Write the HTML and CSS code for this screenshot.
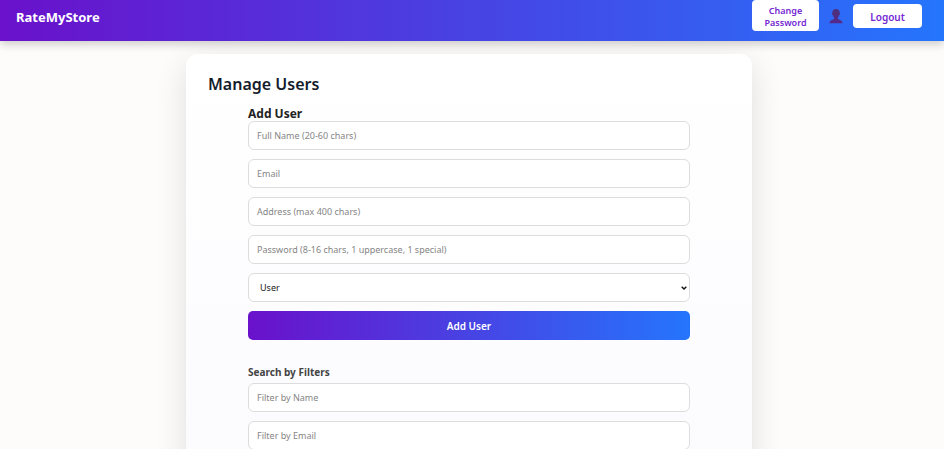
FILE: index.html
```html
<!DOCTYPE html>
<html lang="en">
<head>
<meta charset="utf-8">
<meta name="viewport" content="width=device-width, initial-scale=1">
<title>RateMyStore</title>
<link rel="stylesheet" href="styles.css">
</head>
<body>
<header class="navbar">
  <a class="brand" href="#">RateMyStore</a>
  <nav class="nav-actions">
    <button class="nav-button nav-button-wrap" type="button">Change Password</button>
    <svg class="avatar" viewBox="0 0 14 16" role="img" aria-label="Profile">
      <defs>
        <linearGradient id="bust" x1="0" y1="0" x2="0" y2="1">
          <stop offset="0" stop-color="#4a3078"/>
          <stop offset="1" stop-color="#55298c"/>
        </linearGradient>
      </defs>
      <path fill="url(#bust)" d="M7 1C4.800 1 3.300 2.400 3.300 4.700c0 .4-.4.500-.3 1.300.1.700.4 1 .7 1.100.3 1.200.8 2 1.400 2.600v1.200C3.700 11.700.7 12.100.4 15.300h13.200c-.3-3.200-3.300-3.600-4.700-4.400V9.700c.6-.6 1.100-1.400 1.400-2.600.3-.1.600-.4.700-1.100.1-.8-.3-.9-.3-1.300C10.700 2.400 9.200 1 7 1Z"/>
    </svg>
    <button class="nav-button nav-button-wide" type="button">Logout</button>
  </nav>
</header>
<main class="page">
  <section class="card">
    <h1 class="title">Manage Users</h1>
    <form class="form">
      <h2 class="form-title">Add User</h2>
      <input class="field" type="text" placeholder="Full Name (20-60 chars)" aria-label="Full Name">
      <input class="field" type="email" placeholder="Email" aria-label="Email">
      <input class="field" type="text" placeholder="Address (max 400 chars)" aria-label="Address">
      <input class="field" type="password" placeholder="Password (8-16 chars, 1 uppercase, 1 special)" aria-label="Password">
      <div class="select-wrap">
        <select class="field field-select" aria-label="Role">
          <option>User</option>
        </select>
        <svg class="chevron" viewBox="0 0 6 4" aria-hidden="true">
          <path d="M.7.7 3 3 5.300.7"/>
        </svg>
      </div>
      <button class="submit" type="submit">Add User</button>
    </form>
    <form class="form">
      <h3 class="filter-title">Search by Filters</h3>
      <input class="field" type="text" placeholder="Filter by Name" aria-label="Filter by Name">
      <input class="field" type="text" placeholder="Filter by Email" aria-label="Filter by Email">
    </form>
  </section>
</main>
</body>
</html>
```
FILE: styles.css
```css
* {
  box-sizing: border-box;
}

body {
  display: flex;
  flex-direction: column;
  height: 100vh;
  margin: 0;
  overflow: hidden;
  background: #fdfcfa;
  color: #222;
  font-family: "Segoe UI", "Noto Sans", "Open Sans", sans-serif;
  font-size: 9px;
}

h1,
h2,
h3 {
  margin: 0;
  font-weight: 700;
}

button,
input,
select {
  font: inherit;
}

.navbar {
  position: relative;
  z-index: 1;
  display: flex;
  flex: none;
  align-items: flex-start;
  justify-content: space-between;
  padding: 0 22px 10px 16px;
  background: linear-gradient(90deg, #6a11cb, #2575fc);
  box-shadow: 0 3px 9px rgba(0, 0, 0, 0.2);
}

.brand {
  padding-top: 8px;
  color: #fff;
  font-size: 13px;
  font-weight: 700;
  line-height: 18px;
  text-decoration: none;
}

.nav-actions {
  display: flex;
  align-items: center;
  gap: 10px;
}

.nav-button {
  padding: 5px 12px 3px;
  border: 0;
  border-radius: 4px;
  background: #fff;
  color: #7426d3;
  font-weight: 600;
  line-height: 12px;
}

.nav-button-wrap {
  width: 67px;
  height: 31px;
}

.nav-button-wide {
  width: 69px;
  height: 24px;
  font-size: 10px;
}

.avatar {
  width: 14px;
  height: 16px;
}

.page {
  flex: 1;
  min-height: 0;
  padding: 13px 192px 0 186px;
}

.card {
  padding: 18px 62px 22px;
  border-radius: 12px;
  background: linear-gradient(180deg, #fff, #fbfbfe);
  box-shadow: 0 9px 32px rgba(0, 0, 0, 0.12);
}

.title {
  margin: 0 0 10px -40px;
  color: #141c2b;
  font-size: 16px;
  font-weight: 600;
  line-height: 24px;
}

.form {
  display: flex;
  flex-direction: column;
  gap: 9px;
  margin-bottom: 24px;
}

.form-title {
  margin-bottom: -10px;
  font-size: 12px;
  line-height: 16px;
}

.filter-title {
  margin-bottom: -6px;
  color: #444;
  font-size: 10px;
  line-height: 16px;
}

.field {
  width: 100%;
  height: 29px;
  padding: 0 8px;
  border: 1px solid #ddd;
  border-radius: 6px;
  background: #fff;
  color: #222;
}

.field::placeholder {
  color: #858585;
}

.select-wrap {
  position: relative;
  display: flex;
}

.field-select {
  padding: 0 16px 0 11px;
  appearance: none;
}

.chevron {
  position: absolute;
  top: 13px;
  right: 3px;
  width: 6px;
  height: 4px;
  fill: none;
  stroke: #111;
  stroke-width: 1.4;
  pointer-events: none;
}

.submit {
  height: 29px;
  border: 0;
  border-radius: 5px;
  background: linear-gradient(90deg, #6a11cb, #2575fc);
  color: #fff;
  font-size: 10px;
  font-weight: 600;
}
```
